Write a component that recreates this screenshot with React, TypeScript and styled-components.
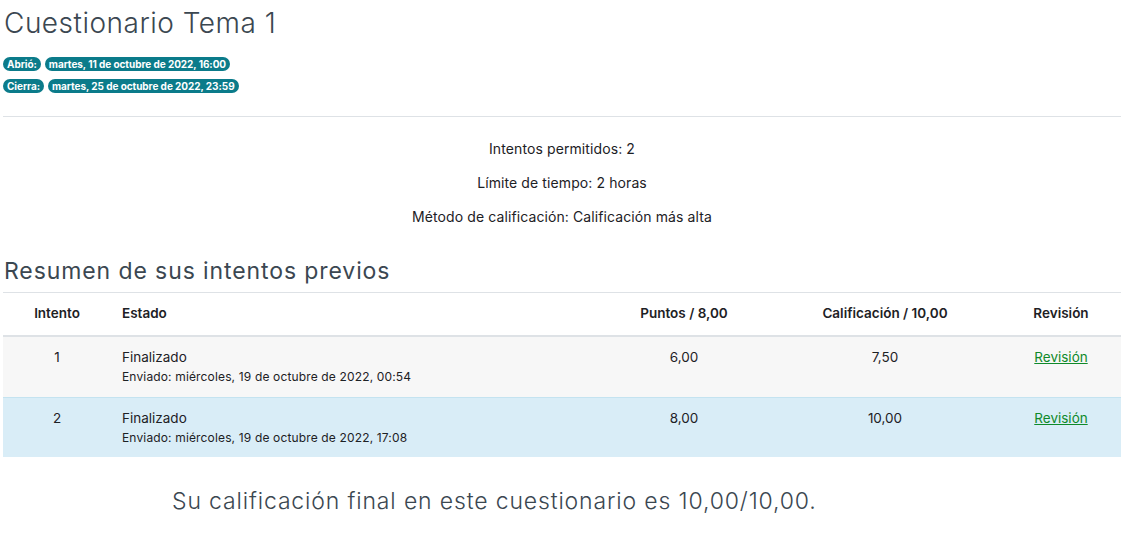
import React from "react";
import styled, { createGlobalStyle } from "styled-components";

const Global = createGlobalStyle`
  html, body { margin: 0; padding: 0; background: #fff; }
  body { font-family: "Inter", "Open Sans", sans-serif; color: #1d2125; }
  * { box-sizing: border-box; }
`;

const Page = styled.div`
  width: 1118px;
  margin-left: 3px;
  padding-top: 6px;
`;

const Title = styled.h2`
  margin: 0 0 0 1px;
  font-size: 28px;
  font-weight: 300;
  color: #3b4751;
  line-height: 34px;
  letter-spacing: 0.5px;
`;

const Dates = styled.div`
  margin-top: 17px;
  display: flex;
  flex-direction: column;
  gap: 8px;
`;

const DateRow = styled.div`
  display: flex;
  gap: 4px;
`;

const Badge = styled.span`
  display: inline-flex;
  align-items: center;
  height: 14px;
  padding: 0 4px;
  border-radius: 7px;
  background: #0b7b8a;
  color: #fff;
  font-size: 10px;
  font-weight: 700;
  letter-spacing: -0.05px;
`;

const Rule = styled.hr`
  margin: 23px 0 0;
  border: 0;
  border-top: 1px solid #dee2e6;
`;

const Info = styled.div`
  display: flex;
  flex-direction: column;
  align-items: center;
  gap: 14px;
  padding-top: 22px;
  font-size: 14px;
  line-height: 20px;
  letter-spacing: 0.1px;
`;

const Heading = styled.h3`
  margin: 30px 0 0 1px;
  font-size: 23px;
  font-weight: 400;
  color: #3b4751;
  line-height: 28px;
  letter-spacing: 0.9px;
`;

const Table = styled.div`
  margin-top: 7px;
  border-top: 1px solid #dee2e6;
  display: grid;
  grid-template-columns: 108px 488px 170px 232px 120px;
`;

const Row = styled.div<{ $bg?: string; $head?: boolean }>`
  display: contents;
  & > div {
    background: ${(p) => p.$bg || "transparent"};
    ${(p) =>
      p.$head
        ? "height: 44px; border-bottom: 2px solid #dee2e6; font-weight: 600; padding-top: 0; padding-bottom: 2px;"
        : "height: 60px; padding-top: 10px;"}
    ${(p) => (p.$bg === "#d9edf7" ? "border-top: 1px solid #c4e3f0;" : "")}
  }
`;

const Cell = styled.div<{ $left?: boolean }>`
  display: flex;
  flex-direction: column;
  align-items: ${(p) => (p.$left ? "flex-start" : "center")};
  justify-content: flex-start;
  padding-left: ${(p) => (p.$left ? "11px" : "0")};
  font-size: 13.5px;
  line-height: 20px;
`;

const HeadCell = styled(Cell)`
  justify-content: center;
`;

const Sub = styled.span`
  font-size: 12px;
  line-height: 20px;
  letter-spacing: 0.15px;
`;

const Link = styled.a`
  color: #0f8a2a;
  text-decoration: underline;
`;

const Final = styled.h3`
  margin: 30px 0 0 169px;
  font-size: 23px;
  font-weight: 300;
  color: #3b4751;
  line-height: 28px;
  letter-spacing: 0.85px;
`;

const rows = [
  { n: "1", date: "Enviado: miércoles, 19 de octubre de 2022, 00:54", p: "6,00", c: "7,50", bg: "#f7f7f7" },
  { n: "2", date: "Enviado: miércoles, 19 de octubre de 2022, 17:08", p: "8,00", c: "10,00", bg: "#d9edf7" },
];

export default function App() {
  return (
    <>
      <Global />
      <Page>
        <Title>Cuestionario Tema 1</Title>
        <Dates>
          <DateRow>
            <Badge>Abrió:</Badge>
            <Badge>martes, 11 de octubre de 2022, 16:00</Badge>
          </DateRow>
          <DateRow>
            <Badge>Cierra:</Badge>
            <Badge>martes, 25 de octubre de 2022, 23:59</Badge>
          </DateRow>
        </Dates>
        <Rule />
        <Info>
          <div>Intentos permitidos: 2</div>
          <div>Límite de tiempo: 2 horas</div>
          <div>Método de calificación: Calificación más alta</div>
        </Info>
        <Heading>Resumen de sus intentos previos</Heading>
        <Table>
          <Row $head>
            <HeadCell>Intento</HeadCell>
            <HeadCell $left>Estado</HeadCell>
            <HeadCell>Puntos / 8,00</HeadCell>
            <HeadCell>Calificación / 10,00</HeadCell>
            <HeadCell>Revisión</HeadCell>
          </Row>
          {rows.map((r) => (
            <Row key={r.n} $bg={r.bg}>
              <Cell>{r.n}</Cell>
              <Cell $left>
                <span>Finalizado</span>
                <Sub>{r.date}</Sub>
              </Cell>
              <Cell>{r.p}</Cell>
              <Cell>{r.c}</Cell>
              <Cell>
                <Link href="#">Revisión</Link>
              </Cell>
            </Row>
          ))}
        </Table>
        <Final>Su calificación final en este cuestionario es 10,00/10,00.</Final>
      </Page>
    </>
  );
}
